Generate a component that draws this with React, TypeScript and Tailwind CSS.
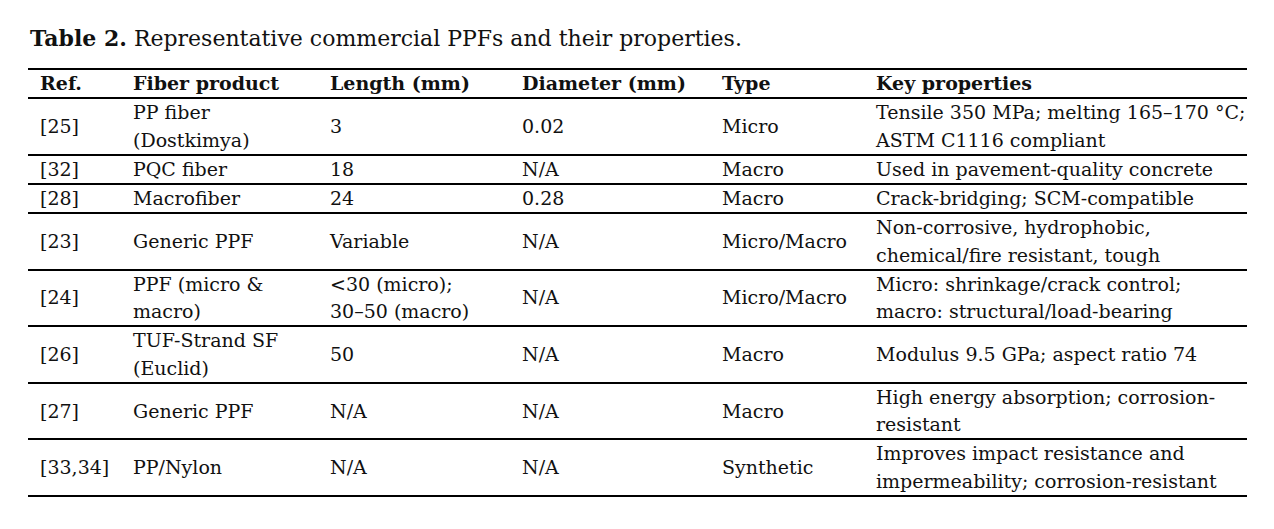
import React from "react";

type Row = {
  ref: string;
  product: string[];
  length: string[];
  diameter: string;
  type: string;
  props: string[];
};

const rows: Row[] = [
  {
    ref: "[25]",
    product: ["PP fiber", "(Dostkimya)"],
    length: ["3"],
    diameter: "0.02",
    type: "Micro",
    props: ["Tensile 350 MPa; melting 165–170 °C;", "ASTM C1116 compliant"],
  },
  {
    ref: "[32]",
    product: ["PQC fiber"],
    length: ["18"],
    diameter: "N/A",
    type: "Macro",
    props: ["Used in pavement-quality concrete"],
  },
  {
    ref: "[28]",
    product: ["Macrofiber"],
    length: ["24"],
    diameter: "0.28",
    type: "Macro",
    props: ["Crack-bridging; SCM-compatible"],
  },
  {
    ref: "[23]",
    product: ["Generic PPF"],
    length: ["Variable"],
    diameter: "N/A",
    type: "Micro/Macro",
    props: ["Non-corrosive, hydrophobic,", "chemical/fire resistant, tough"],
  },
  {
    ref: "[24]",
    product: ["PPF (micro &", "macro)"],
    length: ["<30 (micro);", "30–50 (macro)"],
    diameter: "N/A",
    type: "Micro/Macro",
    props: ["Micro: shrinkage/crack control;", "macro: structural/load-bearing"],
  },
  {
    ref: "[26]",
    product: ["TUF-Strand SF", "(Euclid)"],
    length: ["50"],
    diameter: "N/A",
    type: "Macro",
    props: ["Modulus 9.5 GPa; aspect ratio 74"],
  },
  {
    ref: "[27]",
    product: ["Generic PPF"],
    length: ["N/A"],
    diameter: "N/A",
    type: "Macro",
    props: ["High energy absorption; corrosion-", "resistant"],
  },
  {
    ref: "[33,34]",
    product: ["PP/Nylon"],
    length: ["N/A"],
    diameter: "N/A",
    type: "Synthetic",
    props: ["Improves impact resistance and", "impermeability; corrosion-resistant"],
  },
];

function Lines({ items }: { items: string[] }) {
  return (
    <>
      {items.map((t, i) => (
        <div key={i}>{t}</div>
      ))}
    </>
  );
}

export default function App() {
  return (
    <div
      className="min-h-[529px] w-[1274px] bg-white pl-[28px] pt-[24px] text-[#111]"
      style={{ fontFamily: '"DejaVu Serif", "Liberation Serif", serif' }}
    >
      <p className="mb-[15px] pl-[2px] text-[22px] leading-[28px]">
        <span className="font-bold">Table 2.</span> Representative commercial PPFs and their properties.
      </p>
      <table className="w-[1219px] table-fixed border-collapse text-[19px] leading-[27.27px]">
        <colgroup>
          <col className="w-[93px]" />
          <col className="w-[197px]" />
          <col className="w-[192px]" />
          <col className="w-[200px]" />
          <col className="w-[154px]" />
          <col className="w-[383px]" />
        </colgroup>
        <thead>
          <tr className="border-t-2 border-b-2 border-black text-left font-bold">
            <th className="pl-3 font-bold">Ref.</th>
            <th className="pl-3 font-bold">Fiber product</th>
            <th className="pl-3 font-bold">Length (mm)</th>
            <th className="pl-3 font-bold">Diameter (mm)</th>
            <th className="pl-3 font-bold">Type</th>
            <th className="pl-3 font-bold">Key properties</th>
          </tr>
        </thead>
        <tbody>
          {rows.map((r) => (
            <tr key={r.ref} className="border-b-2 border-black align-middle whitespace-nowrap">
              <td className="pl-3">{r.ref}</td>
              <td className="pl-3">
                <Lines items={r.product} />
              </td>
              <td className="pl-3">
                <Lines items={r.length} />
              </td>
              <td className="pl-3">{r.diameter}</td>
              <td className="pl-3">{r.type}</td>
              <td className="pl-3">
                <Lines items={r.props} />
              </td>
            </tr>
          ))}
        </tbody>
      </table>
    </div>
  );
}
